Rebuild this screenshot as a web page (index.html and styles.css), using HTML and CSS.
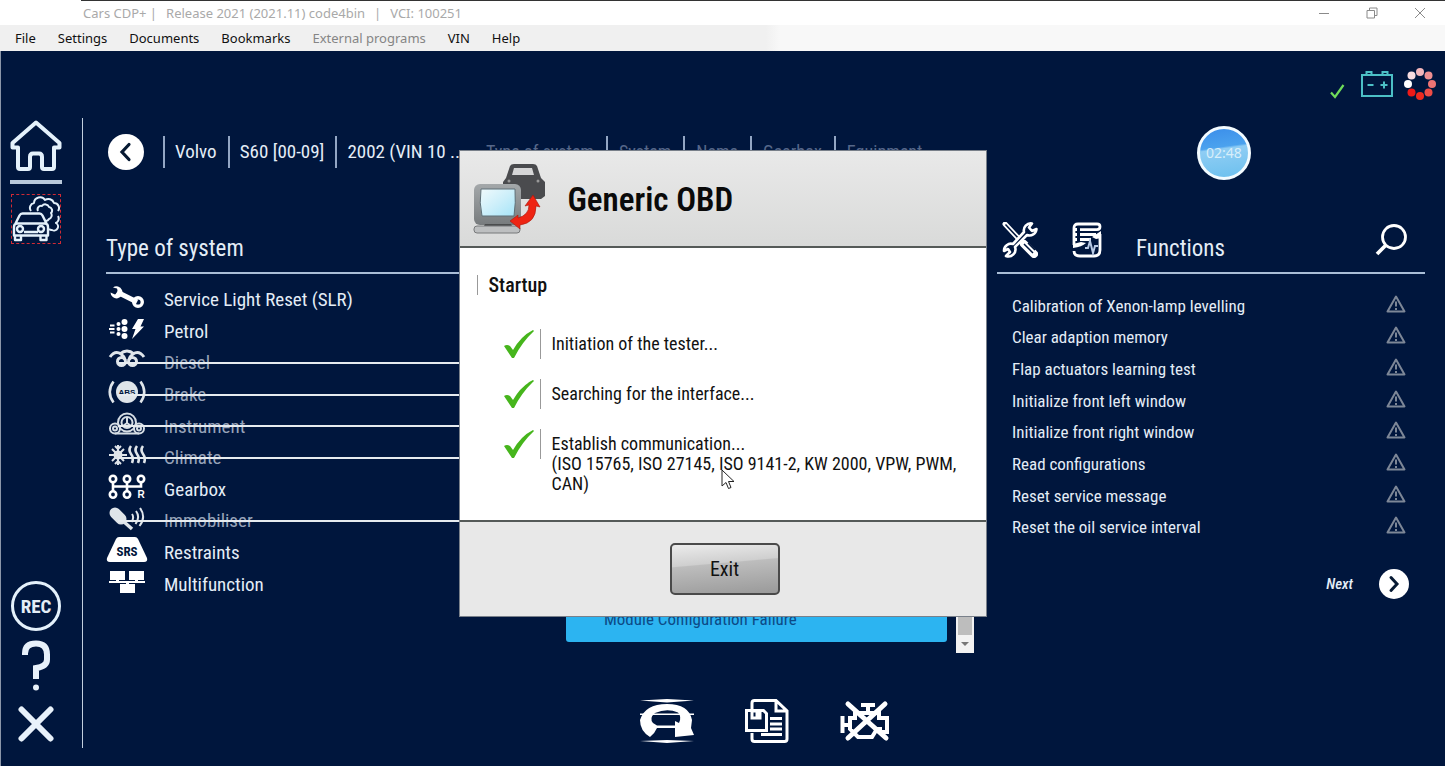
FILE: index.html
```html
<!DOCTYPE html>
<html lang="en">
<head>
<meta charset="utf-8">
<title>Cars CDP+</title>
<link rel="stylesheet" href="styles.css">
</head>
<body>
<div class="window">
  <header class="titlebar">
    <div class="caption"><span>Cars CDP+ |</span><span>Release 2021 (2021.11) code4bin</span><span>|</span><span>VCI: 100251</span></div>
    <div class="window-buttons">
      <button type="button" aria-label="Minimise"><svg width="12" height="12" viewBox="0 0 12 12"><path d="M1 6.500h10"/></svg></button>
      <button type="button" aria-label="Restore"><svg width="12" height="12" viewBox="0 0 12 12"><path d="M1 3.500h7.500V11H1zM3.500 3.500V1H11v7.500H8.500"/></svg></button>
      <button type="button" aria-label="Close"><svg width="12" height="12" viewBox="0 0 12 12"><path d="M1 1l10 10M11 1L1 11"/></svg></button>
    </div>
  </header>
  <nav class="menubar">
    <button type="button">File</button>
    <button type="button">Settings</button>
    <button type="button">Documents</button>
    <button type="button">Bookmarks</button>
    <button type="button" disabled>External programs</button>
    <button type="button">VIN</button>
    <button type="button">Help</button>
  </nav>

  <div class="workspace">
    <div class="status">
      <svg class="status-check" width="16" height="16" viewBox="0 0 16 16"><path d="M2 9.500l4 4.500L14.500 2" fill="none" stroke="#6fdc5a" stroke-width="2.200"/></svg>
      <svg width="32" height="26" viewBox="0 0 32 26" fill="none" stroke="#4cc0c6" stroke-width="2"><path d="M1 4h30v21H1zM5.500 4V1h5v3M21.500 4V1h5v3M6.500 14h6M19.500 14h7M23 10.500v7"/></svg>
      <svg width="32" height="32" viewBox="0 0 32 32"><circle cx="16" cy="4" r="4" fill="#f3b6bb"/><circle cx="24.500" cy="7.500" r="4" fill="#f09092"/><circle cx="28" cy="16" r="4" fill="#ee7474"/><circle cx="24.500" cy="24.500" r="4" fill="#ee4c46"/><circle cx="16" cy="28" r="4" fill="#ee2a20"/><circle cx="7.500" cy="24.500" r="4" fill="#ee1a18"/><circle cx="4" cy="16" r="4" fill="#fff"/><circle cx="7.500" cy="7.500" r="4" fill="#f8dce0"/></svg>
    </div>

    <div class="body">
      <aside class="sidebar">
        <button type="button" class="home" aria-label="Home"><svg width="52" height="52" viewBox="0 0 52 52" fill="none" stroke="#e4f1fb" stroke-width="4" stroke-linejoin="round"><path d="M26 2.500L2.500 23v4.500H8V47q0 2 2 2h8q2 0 2-2V37q0-3.500 3-3.500h6q3 0 3 3.500v10q0 2 2 2h8q2 0 2-2V27.500h5.500V23z"/></svg></button>
        <button type="button" class="exhaust" aria-label="Emissions"><svg width="48" height="48" viewBox="0 0 48 48" fill="none" stroke="#e4f1fb" stroke-width="2.400" stroke-linejoin="round"><path d="M3.500 28.500l4-8q1-2 3-2h17q2 0 3 2l4 8M3.500 28.500h31M2 32q0-3.500 3-3.500h28q3 0 3 3.500v8.500H2zM3 40.500v4.500h6v-4.500M28.500 40.500v4.500h6v-4.500M12 37h14"/><circle cx="8" cy="34" r="3"/><circle cx="29" cy="34" r="3"/><path stroke-width="2" d="M19 16a5 5 0 0 1 3-8a6 6 0 0 1 11-3a6 6 0 0 1 9 3a5 5 0 0 1 4 8M46 21a5 5 0 0 1-2 7a4 4 0 0 1-4 7a4 4 0 0 1-3-1M26 16a3.500 3.500 0 0 1 4-5a4 4 0 0 1 7 1a3.500 3.500 0 0 1 2 6a4 4 0 0 1-2 6a4 4 0 0 1-3 2"/></svg></button>
        <button type="button" class="record">REC</button>
        <button type="button" aria-label="Help"><svg width="28" height="52" viewBox="0 0 28 52"><path d="M3 15v-1.500Q3 3.500 14 3.500T25 14.500v5Q25 26.500 14 28v11" fill="none" stroke="#e8f1fa" stroke-width="6"/><circle cx="14" cy="47.500" r="3" fill="#e8f1fa"/></svg></button>
        <button type="button" class="quit" aria-label="Exit program"><svg width="36" height="36" viewBox="0 0 36 36"><path d="M3.500 3.500l29 29M32.500 3.500l-29 29" stroke="#e8f1fa" stroke-width="6" stroke-linecap="round"/></svg></button>
      </aside>

      <main class="content">
        <div class="crumbs">
          <button type="button" class="round back" aria-label="Back"><svg width="18" height="20" viewBox="0 0 18 20"><path d="M12 2.500L5 10l7 7.500" fill="none" stroke="#071a33" stroke-width="3.200" stroke-linecap="round"/></svg></button>
          <ul class="chosen"><li>Volvo</li><li>S60 [00-09]</li><li>2002 (VIN 10 ...</li></ul>
          <ul class="pending"><li>Type of system</li><li>System</li><li>Name</li><li>Gearbox</li><li>Equipment</li></ul>
        </div>

        <div class="columns">
          <section class="systems">
            <div class="heading"><h2>Type of system</h2></div>
            <ul>
              <li><svg width="42" height="26" viewBox="0 0 42 26"><path d="M11 8l20 10" stroke="#fff" stroke-width="5"/><circle cx="32" cy="18" r="4.300" fill="none" stroke="#fff" stroke-width="3.400"/><path d="M4.500 8.500A6 6 0 1 0 7 3.500L11 4.500L12 8L9 10.500z" fill="#fff"/></svg><a href="#slr">Service Light Reset (SLR)</a></li>
              <li><svg width="42" height="26" viewBox="0 0 42 26" fill="#fff"><path d="M32 3h6l-3.500 7.500H38L26 23l3.500-10H26z"/><circle cx="18.500" cy="6" r="3"/><circle cx="18.500" cy="13" r="3"/><circle cx="18.500" cy="20" r="3"/><circle cx="12.500" cy="8" r="2"/><circle cx="12.500" cy="13" r="2"/><circle cx="12.500" cy="18" r="2"/><path d="M4 8.500h4.500v2H4zM3 12h5.500v2H3zM4 15.500h4.500v2H4z"/></svg><a href="#petrol">Petrol</a></li>
              <li class="off"><svg width="42" height="26" viewBox="0 0 42 26" fill="none" stroke="#dfe5ea" stroke-width="3"><path d="M4 10Q9 3 15 7Q18 9 19 13M38 10Q33 3 27 7Q24 9 23 13M14 7Q21 1 28 7"/><circle cx="15.500" cy="14.500" r="4"/><circle cx="26.500" cy="14.500" r="4"/></svg><span>Diesel</span></li>
              <li class="off"><svg width="42" height="26" viewBox="0 0 42 26"><circle cx="21" cy="13" r="11" fill="#dfe5ea"/><path d="M7.500 2.500Q0 13 7.500 23.500M34.500 2.500Q42 13 34.500 23.500" fill="none" stroke="#dfe5ea" stroke-width="2.600"/><text x="21" y="16" class="icon-text-small">ABS</text></svg><span>Brake</span></li>
              <li class="off"><svg width="42" height="26" viewBox="0 0 42 26" fill="none" stroke="#d5dde4" stroke-width="2"><circle cx="21" cy="11.500" r="9"/><circle cx="21" cy="11.500" r="5.500"/><circle cx="9" cy="17.500" r="5"/><circle cx="33" cy="17.500" r="5"/><circle cx="9" cy="17.500" r="2"/><circle cx="33" cy="17.500" r="2"/><path d="M21 6v6l4 3M21 12l-4 3M9 22.500h24"/></svg><span>Instrument</span></li>
              <li class="off"><svg width="42" height="26" viewBox="0 0 42 26" fill="none" stroke="#dfe5ea" stroke-width="2"><path d="M12 3v20M3 13h18M6 7l12 12M18 7L6 19M9 4l3 3 3-3M9 22l3-3 3 3"/><circle cx="12" cy="13" r="3.500"/><path d="M25 4q-3 4 0 8t1 9M31 4q-3 4 0 8t1 9M37 4q-3 4 0 8t1 9" stroke-width="2.600"/></svg><span>Climate</span></li>
              <li><svg width="42" height="26" viewBox="0 0 42 26" fill="none" stroke="#fff" stroke-width="2.600"><circle cx="7" cy="5" r="3.200"/><circle cx="21" cy="5" r="3.200"/><circle cx="35" cy="5" r="3.200"/><circle cx="7" cy="20.500" r="3.200"/><circle cx="21" cy="20.500" r="3.200"/><path d="M7 8v9M21 8v9M7 12.500h28V8"/><text x="35" y="24" class="icon-text-r">R</text></svg><a href="#gearbox">Gearbox</a></li>
              <li class="off"><svg width="42" height="26" viewBox="0 0 42 26" fill="none" stroke="#dfe5ea"><path d="M9 8l6 6" stroke-width="11" stroke-linecap="round"/><path d="M17 16l9 8" stroke-width="3.500"/><path d="M26 9q2.500 3.500-.5 8M30 6q4.500 6-.5 13M34 3q6.500 9-.5 18" stroke-width="2"/></svg><span>Immobiliser</span></li>
              <li><svg width="42" height="26" viewBox="0 0 42 26"><path d="M13 0h16q2 0 3 2l9 19q1 4-3 4H4q-4 0-3-4L10 2q1-2 3-2z" fill="#fff"/><text x="21" y="19" class="icon-text-srs">SRS</text></svg><a href="#restraints">Restraints</a></li>
              <li><svg width="42" height="26" viewBox="0 0 42 26" fill="#fff"><path d="M4 2h15v9H4zM23 2h15v9H23zM14 15h15v9H14zM3 12h36v2H3zM10 10h3v3h-3zM29 10h3v3h-3zM20 13h3v3h-3z"/></svg><a href="#multifunction">Multifunction</a></li>
            </ul>
          </section>

          <section class="results">
            <ul><li><a href="#module">Module Configuration Failure</a></li></ul>
            <div class="scroller"><i class="thumb"></i><svg width="10" height="18" viewBox="0 0 10 18"><path d="M1 7h8l-4 4z" fill="#777"/></svg></div>
          </section>

          <section class="functions">
            <div class="heading">
              <svg width="36" height="36" viewBox="0 0 36 36"><path d="M3 2l14 15" stroke="#fff" stroke-width="5" stroke-linecap="round"/><path d="M3.500 2.500l14 15" stroke="#00163d" stroke-width="1.600"/><path d="M22 22l10 10" stroke="#fff" stroke-width="8" stroke-linecap="round"/><path d="M22 22l9 9M26 21l7 7" stroke="#00163d" stroke-width="1.500"/><path d="M34.500 7A7 7 0 0 1 25 13L13 25A7 7 0 0 1 4 34L8 30L6 27L2 29A7 7 0 0 1 11 22L22 10A7 7 0 0 1 30 1.500L27 5.500L30 9z" fill="#00163d" stroke="#fff" stroke-width="2.600" stroke-linejoin="round"/></svg>
              <svg width="30" height="36" viewBox="0 0 30 36" fill="none" stroke="#fff" stroke-width="2.800"><path d="M28 12V28q0 6-6 6H8q-6 0-6-5M2 23V6q0-4 4-4h19q3 0 3 2.800t-3 2.800H8M8 12.500h16M8 17.500h11M3 7.500h2M3 12.500h2M3 17.500h2"/><path d="M1 22v4q9-1 13-5l-5-1zM20 15l9-6v6q-2 2-5 2z" fill="#fff" stroke="none"/><path d="M13 26h3l2-7 3 12 2-7h3" stroke="#b9cbe6" stroke-width="2"/></svg>
              <h2>Functions</h2>
              <button type="button" aria-label="Search"><svg width="32" height="32" viewBox="0 0 32 32" fill="none" stroke="#fff"><circle cx="19" cy="13" r="11.500" stroke-width="2.800"/><path d="M10.500 21.500L2 30" stroke-width="3.800"/></svg></button>
            </div>
            <ul>
              <li><a href="#f1">Calibration of Xenon-lamp levelling</a><svg class="warn" width="20" height="18" viewBox="0 0 20 18"><path d="M10 1.500L18.500 16.500h-17zM10 6.500v5M10 13v2"/></svg></li>
              <li><a href="#f2">Clear adaption memory</a><svg class="warn" width="20" height="18" viewBox="0 0 20 18"><path d="M10 1.500L18.500 16.500h-17zM10 6.500v5M10 13v2"/></svg></li>
              <li><a href="#f3">Flap actuators learning test</a><svg class="warn" width="20" height="18" viewBox="0 0 20 18"><path d="M10 1.500L18.500 16.500h-17zM10 6.500v5M10 13v2"/></svg></li>
              <li><a href="#f4">Initialize front left window</a><svg class="warn" width="20" height="18" viewBox="0 0 20 18"><path d="M10 1.500L18.500 16.500h-17zM10 6.500v5M10 13v2"/></svg></li>
              <li><a href="#f5">Initialize front right window</a><svg class="warn" width="20" height="18" viewBox="0 0 20 18"><path d="M10 1.500L18.500 16.500h-17zM10 6.500v5M10 13v2"/></svg></li>
              <li><a href="#f6">Read configurations</a><svg class="warn" width="20" height="18" viewBox="0 0 20 18"><path d="M10 1.500L18.500 16.500h-17zM10 6.500v5M10 13v2"/></svg></li>
              <li><a href="#f7">Reset service message</a><svg class="warn" width="20" height="18" viewBox="0 0 20 18"><path d="M10 1.500L18.500 16.500h-17zM10 6.500v5M10 13v2"/></svg></li>
              <li><a href="#f8">Reset the oil service interval</a><svg class="warn" width="20" height="18" viewBox="0 0 20 18"><path d="M10 1.500L18.500 16.500h-17zM10 6.500v5M10 13v2"/></svg></li>
            </ul>
            <div class="pager"><label for="next">Next</label><button type="button" id="next" class="round next"><svg width="16" height="18" viewBox="0 0 16 18"><path d="M5 2.500L11 9l-6 6.500" fill="none" stroke="#071a33" stroke-width="3" stroke-linecap="round"/></svg></button></div>
          </section>
        </div>

        <div class="toolbar">
          <button type="button" aria-label="Vehicle scan"><svg width="54" height="44" viewBox="0 0 54 44" fill="#fff"><path d="M0 1.500L27 0l27 1.500L27 3.500zM0 42L27 41l27 1-27 2z"/><path d="M0 14.500h54v1.500H0z"/><path fill-rule="evenodd" d="M10 38Q0 32 0 21Q5 5 27 5T52 21L51 29L54 36L35 38L35 29H17Q15 34 10 38zM15 14Q9 19 13 24L17 26.500H35V22L39 24Q42 18 38 13.500Q27 9 15 14z"/></svg></button>
          <button type="button" aria-label="Save report"><svg width="44" height="44" viewBox="0 0 44 44" fill="none" stroke="#fff" stroke-width="3"><path d="M7 11V4q0-2.500 2.500-2.500H31L42 12v28q0 2.500-2.500 2.500h-30Q7 42.500 7 40v-6M31 2v10h11"/><path d="M1.500 11.500h17l3 3V31.500h-20z"/><path d="M7 12h8v7H7zM12 12v6M25 19.500h12M25 25h12M25 30h12M16 35.500h21"/></svg></button>
          <button type="button" aria-label="Engine faults"><svg width="50" height="44" viewBox="0 0 50 44" fill="none" stroke="#fff" stroke-width="4"><path d="M21 6h14M28 6v7M2.500 17v17M2 26h9M15 14h24v5h8v14h-7v-3h-3l-5 8H18l-8-8V19h5z"/><path d="M8 5l38 34M45 5L8 39" stroke-width="5" stroke-linecap="round"/></svg></button>
        </div>
      </main>
    </div>
    <div class="timer">02:48</div>
  </div>
</div>

<div class="overlay">
  <div class="dialog" role="dialog" aria-labelledby="dlg-title">
    <div class="dialog-head">
      <svg width="76" height="74" viewBox="0 0 76 74">
        <defs>
          <linearGradient id="glass" x1="0" y1="0" x2="1" y2="1"><stop offset="0" stop-color="#f0fafc"/><stop offset=".5" stop-color="#cdeffa"/><stop offset="1" stop-color="#a5e4f8"/></linearGradient>
          <linearGradient id="case" x1="0" y1="0" x2="0" y2="1"><stop offset="0" stop-color="#a4a8aa"/><stop offset="1" stop-color="#777b7d"/></linearGradient>
        </defs>
        <path d="M31 21l3-4L38 5q1-2 4-2h19q3 0 4 2l4 12 4 4v14l-4 3H31z" fill="#4a4b4e"/>
        <path d="M42 7h18l2 7H40z" fill="#d5d5d6"/><circle cx="37" cy="20" r="1.500" fill="#999"/><circle cx="66" cy="20" r="1.500" fill="#999"/>
        <rect x="2" y="23" width="47" height="41" rx="6" fill="url(#case)"/>
        <path d="M9 28h34q1 14-1 27H10q-3-13-1-27z" fill="url(#glass)" stroke="#5f6f76"/>
        <path d="M13 63h26l2 4H11z" fill="#4b4d4e"/><rect x="2" y="65" width="46" height="7" rx="3" fill="#bdbfc0" stroke="#77797a"/>
        <path d="M38 60l8-6v3Q57 54 57 44l-4 1 8-11 7 12-4-1Q64 62 48 64v4z" fill="#ee2413" stroke="#a8170b" stroke-width=".6"/>
      </svg>
      <h1 id="dlg-title">Generic OBD</h1>
    </div>
    <div class="dialog-body">
      <h3>Startup</h3>
      <ol>
        <li><svg class="tick" width="32" height="30" viewBox="0 0 32 30"><path d="M1 17q3-2 6 0l3 4Q18 7 30 1l1 1Q19 13 11 29H9z"/></svg><p>Initiation of the tester...</p></li>
        <li><svg class="tick" width="32" height="30" viewBox="0 0 32 30"><path d="M1 17q3-2 6 0l3 4Q18 7 30 1l1 1Q19 13 11 29H9z"/></svg><p>Searching for the interface...</p></li>
        <li><svg class="tick" width="32" height="30" viewBox="0 0 32 30"><path d="M1 17q3-2 6 0l3 4Q18 7 30 1l1 1Q19 13 11 29H9z"/></svg><p>Establish communication...<br>(ISO 15765, ISO 27145, ISO 9141-2, KW 2000, VPW, PWM, CAN)</p></li>
      </ol>
      <svg class="pointer" width="14" height="21" viewBox="0 0 14 21"><path d="M1 1v16l4-3.500 2.500 6 2.500-1-2.500-6H13z" fill="#fff" stroke="#222"/></svg>
    </div>
    <div class="dialog-foot"><button type="button">Exit</button></div>
  </div>
</div>
</body>
</html>
```
FILE: styles.css
```css
* { box-sizing: border-box; }
body { margin: 0; font-family: "Roboto Condensed", "Liberation Sans Narrow", Roboto, "Liberation Sans", sans-serif; color: #e4edf7; }
button { margin: 0; padding: 0; border: 0; background: none; color: inherit; font: inherit; }
ul, ol { list-style: none; margin: 0; padding: 0; }
h1, h2, h3, p { margin: 0; font-weight: normal; }
a { color: inherit; text-decoration: none; }
svg { display: block; flex: none; }

.window { display: flex; flex-direction: column; min-height: 100vh; background: #00163d; }
.titlebar { display: flex; justify-content: space-between; align-items: center; height: 25px; padding: 0 19px 0 83px; background: linear-gradient(#333, #333) 81px 0 / 100% 1px no-repeat #fff; font: 13px "Noto Sans", sans-serif; color: #a9a9a9; }
.caption { display: flex; gap: 9px; }
.window-buttons { display: flex; gap: 36px; }
.window-buttons svg { fill: none; stroke: #8a8a8a; }
.menubar { display: flex; align-items: center; gap: 22px; height: 26px; padding-left: 15px; background: linear-gradient(90deg, #f0f0f0 53%, #f8f8f8 54%); font: 13px "Noto Sans", sans-serif; color: #111; }
.menubar button:disabled { color: #858585; }

.workspace { position: relative; flex: 1; display: flex; flex-direction: column; border-left: 1px solid #8b96a9; }
.status { display: flex; justify-content: flex-end; align-items: center; gap: 11px; height: 67px; padding: 0 9px 1px 0; }
.status-check { margin: 14px 5px 0 0; }
.body { flex: 1; display: flex; padding-bottom: 18px; }

.sidebar { display: flex; flex-direction: column; align-items: center; width: 82px; padding: 2px 11px 6px 0; border-right: 1px solid #c2cfde; }
.home { padding-bottom: 8px; border-bottom: 4px solid #b9c8da; }
.exhaust { margin-top: 10px; border: 1px dashed #d02a35; }
.record { width: 50px; height: 50px; margin: auto 0 9px; border: 3px solid #e4f1fb; border-radius: 50%; font-size: 19px; font-weight: bold; }
.quit { margin-top: 14px; }

.content { flex: 1; min-width: 0; display: flex; flex-direction: column; padding: 8px 20px 5px 23px; }
.crumbs { display: flex; align-items: center; height: 51px; }
.round { display: flex; align-items: center; justify-content: center; border-radius: 50%; background: #fff; }
.back { width: 36px; height: 36px; margin: 0 19px 0 2px; }
.crumbs ul { display: flex; white-space: nowrap; }
.crumbs li { padding: 0 11px 0 10px; line-height: 32px; border-left: 2px solid #93a6c4; }
.chosen { font-size: 19px; }
.pending { font-size: 18px; color: #566789; }
.crumbs .pending li { padding: 0 12px 0 11px; }
.crumbs .pending li:first-child { padding-left: 10px; border: 0; }

.columns { flex: 1; display: grid; grid-template-columns: 437fr 408fr 428fr; gap: 23px; padding-top: 33px; }
.heading { display: flex; align-items: center; height: 64px; border-bottom: 2px solid #a9bdd6; }
h2 { font-size: 23px; line-height: 28px; }
.systems h2 { padding-top: 16px; }
.systems ul { display: grid; grid-auto-rows: 1fr; min-height: 316px; margin-top: 10px; font-size: 19px; }
.systems li { position: relative; display: flex; align-items: center; gap: 16px; }
.systems li svg { margin-bottom: 5px; }
.off { color: #97a3b9; }
.off::after { content: ""; position: absolute; left: 12px; right: 0; top: 15px; height: 2px; background: #e6ebef; }
.icon-text-small { font: bold 8px "Liberation Sans", sans-serif; fill: #00163d; text-anchor: middle; }
.icon-text-r { font: bold 10px "Liberation Sans", sans-serif; fill: #fff; stroke: none; text-anchor: middle; }
.icon-text-srs { font: bold 13px "Roboto Condensed", "Liberation Sans Narrow", sans-serif; fill: #00163d; text-anchor: middle; }

.results { display: flex; align-items: flex-end; justify-content: space-between; }
.results ul { flex: 1; margin: 0 9px 11px 0; }
.results li { padding: 12px 38px; border-radius: 3px; background: #2cb4f1; color: #0c4a86; font-size: 17px; line-height: 22px; }
.scroller { display: flex; flex-direction: column; align-items: center; width: 18px; background: #f2f2f2; }
.thumb { width: 14px; height: 90px; background: #bdbdbd; }

.functions { display: flex; flex-direction: column; }
.functions .heading { padding: 0 18px 2px 5px; }
.functions .heading svg { margin-right: 34px; }
.functions .heading h2 { flex: 1; padding-top: 18px; }
.functions .heading button svg { margin: 0; }
.functions ul { display: grid; grid-auto-rows: 1fr; min-height: 253px; margin-top: 16px; padding: 0 19px 0 15px; font-size: 17px; }
.functions li { display: flex; align-items: center; justify-content: space-between; }
.warn { margin-bottom: 4px; fill: none; stroke: #7d8797; stroke-width: 2; stroke-linejoin: round; }
.pager { display: flex; align-items: center; justify-content: flex-end; gap: 26px; margin-top: 26px; padding-right: 16px; font-size: 15px; font-style: italic; font-weight: 500; }
.next { width: 30px; height: 30px; }
.toolbar { display: flex; align-items: center; justify-content: center; gap: 51px; padding: 46px 2px 0 0; }

.timer { position: absolute; right: 194px; top: 75px; width: 54px; height: 54px; border: 3px solid #f3fbff; border-radius: 50%; background: linear-gradient(172deg, #3b8eea 0, #4ba2ee 38%, #8fcdf4 42%, #6cc0ee 100%); font: 14px/48px "Noto Sans", sans-serif; color: #d8eefa; text-align: center; }

.overlay { position: fixed; inset: 0; display: flex; align-items: center; justify-content: center; }
.dialog { width: 528px; border: 1px solid #79808a; background: #fff; color: #111; }
.dialog-head { display: flex; align-items: center; gap: 20px; height: 97px; padding-left: 12px; border-bottom: 2px solid #555a58; background: linear-gradient(#e9e9e9, #d9dad9); }
h1 { padding-top: 2px; font-size: 33px; font-weight: 600; color: #0a0a0a; }
.dialog-body { position: relative; padding: 27px 29px 26px 17px; border-bottom: 2px solid #555a58; }
h3 { padding-left: 11px; border-left: 1px solid #999; font-size: 20px; line-height: 20px; font-weight: 500; }
.dialog-body ol { display: grid; gap: 20px; padding: 34px 0 0 26px; font-size: 18px; line-height: 20px; font-weight: 500; }
.dialog-body li { display: flex; gap: 5px; }
.dialog-body p { padding: 5px 0 0 12px; background: linear-gradient(#999, #999) 0 0 / 1px 30px no-repeat; }
.tick { fill: #46b51c; }
.pointer { position: absolute; left: 261px; top: 221px; }
.dialog-foot { display: flex; justify-content: center; padding: 21px 0 21px 4px; background: #e8e8e8; }
.dialog-foot button { width: 110px; height: 52px; border: 2px solid #4a4a4a; border-radius: 5px; background: linear-gradient(175deg, #ececec 0, #cfcfcf 38%, #bdbdbd 40%, #9a9a9a 100%); font-size: 20px; color: #111; }
```
